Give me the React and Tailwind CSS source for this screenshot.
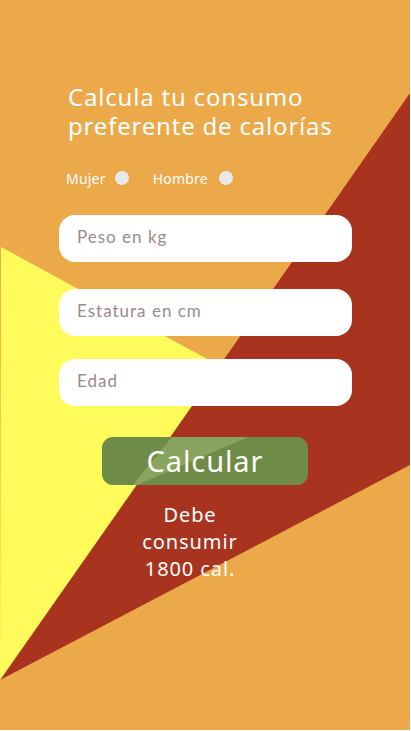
import React from "react";

export default function App() {
  return (
    <div className="w-[411px] h-[731px] bg-white">
      <div className="relative w-[410px] h-[730px] overflow-hidden bg-[#ECA94A]" style={{ fontFamily: "'Noto Sans', 'Open Sans', sans-serif" }}>
        <svg className="absolute inset-0" width="410" height="730" viewBox="0 0 410 730">
          <polygon points="410,93 410,465 0,680" fill="#A8341F" />
          <polygon points="1,247 220,366 0,680" fill="#FEFB5B" />
        </svg>
        <div className="relative flex flex-col">
          <h1 className="pt-[82px] pl-[68px] text-[24px] leading-[29px] text-white font-normal tracking-[0.8px]">
            Calcula tu consumo<br />preferente de calorías
          </h1>
          <div className="mt-[28px] pl-[66px] flex items-center h-[20px] text-[14px] text-white tracking-[0.2px]">
            <span>Mujer</span>
            <span className="ml-[9px] w-[14px] h-[14px] rounded-full bg-[#E8E8E8]"></span>
            <span className="ml-[24px]">Hombre</span>
            <span className="ml-[11px] w-[14px] h-[14px] rounded-full bg-[#E8E8E8]"></span>
          </div>
          <div className="mt-[27px] ml-[59px] w-[293px] flex flex-col" style={{ fontFamily: "Lato, sans-serif" }}>
            <div className="h-[47px] rounded-[16px] bg-white flex items-center pl-[18px] pb-[4px] text-[17px] text-[#9B8A8D] tracking-[1px]">Peso en kg</div>
            <div className="mt-[27px] h-[47px] rounded-[16px] bg-white flex items-center pl-[18px] pb-[4px] text-[17px] text-[#9B8A8D] tracking-[1px]">Estatura en cm</div>
            <div className="mt-[23px] h-[47px] rounded-[16px] bg-white flex items-center pl-[18px] pb-[4px] text-[17px] text-[#9B8A8D] tracking-[1px]">Edad</div>
          </div>
          <div className="mt-[31px] ml-[102px] relative w-[206px] h-[48px] rounded-[11px] bg-[#6F8B48] overflow-hidden flex items-center justify-center">
            <svg className="absolute inset-0" width="206" height="48" viewBox="0 0 206 48">
              <polygon points="70,0 146,0 35,48 31,48" fill="#88A45E" />
            </svg>
            <span className="relative text-[29px] leading-none text-white tracking-[0.9px] pb-[2px]">Calcular</span>
          </div>
          <div className="mt-[16px] w-[380px] text-center text-[20px] leading-[27px] text-white tracking-[0.9px]">
            Debe<br />consumir<br />1800 cal.
          </div>
        </div>
      </div>
    </div>
  );
}
